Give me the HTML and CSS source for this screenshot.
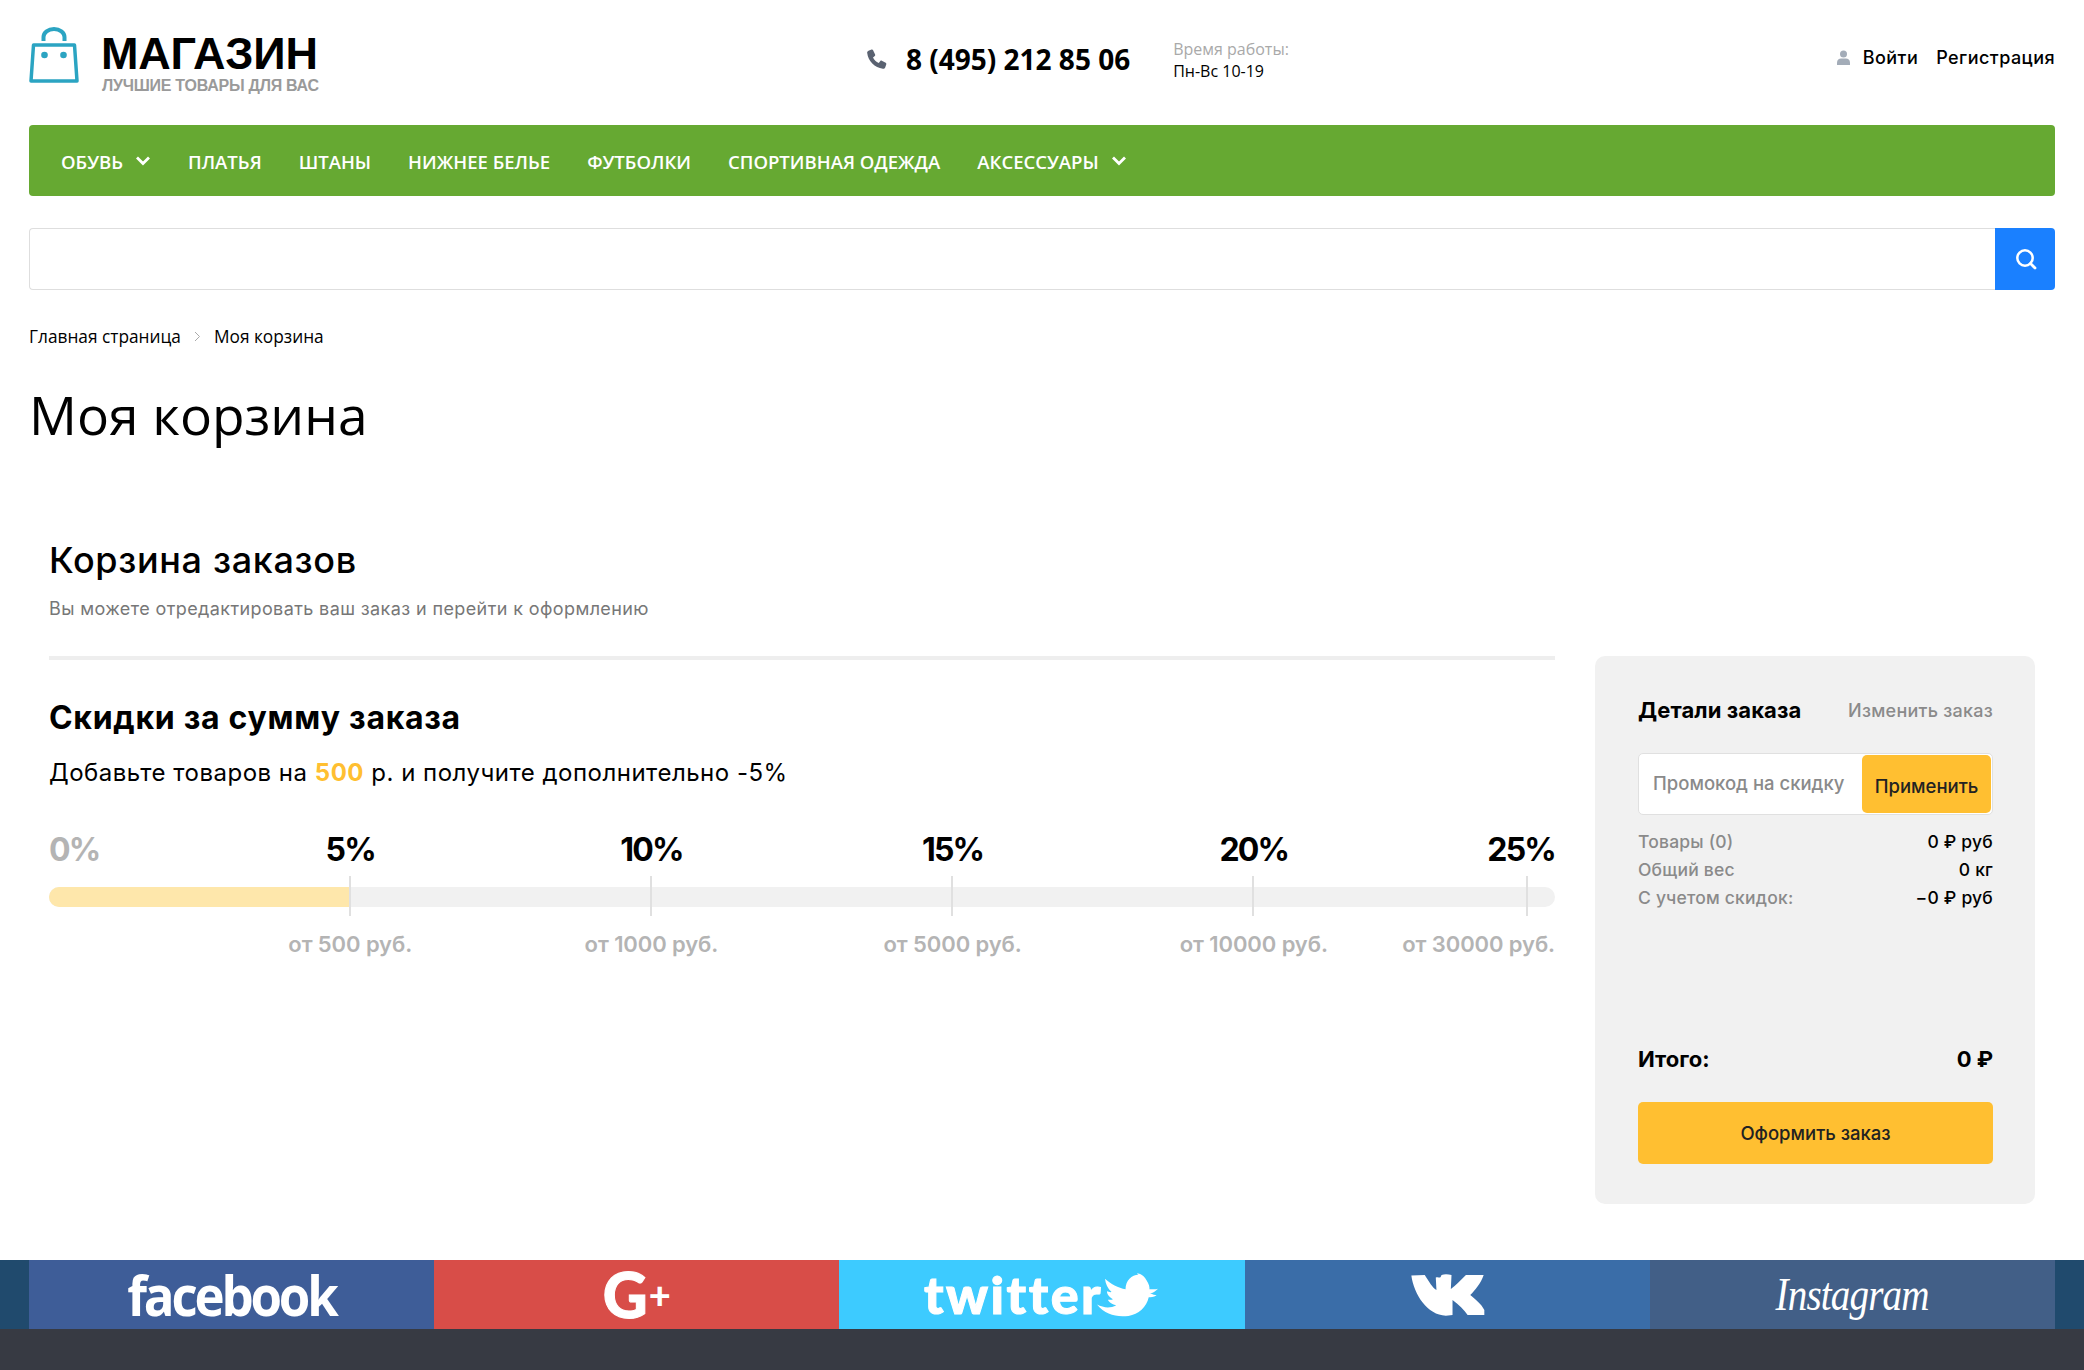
FILE: index.html
```html
<!DOCTYPE html>
<html lang="ru">
<head>
<meta charset="utf-8">
<title>Моя корзина</title>
<link rel="stylesheet" href="styles.css">
</head>
<body>
<div class="wrap">
  <header class="top">
    <a class="logo">
      <svg class="logo-bag" width="50" height="56" viewBox="0 0 50 56"><path d="M14.500 14V10a10.500 8 0 0 1 21 0v4" fill="none" stroke="#2ba4c2" stroke-width="4"/><path d="M4.500 18H45.500l2.500 36H2z" fill="#fff" stroke="#2ba4c2" stroke-width="3.500" stroke-linejoin="round"/><circle cx="15.500" cy="28" r="3.300" fill="#2ba4c2"/><circle cx="34.500" cy="28" r="3.300" fill="#2ba4c2"/></svg>
      <span class="logo-text"><span class="logo-name">МАГАЗИН</span><span class="logo-sub">ЛУЧШИЕ ТОВАРЫ ДЛЯ ВАС</span></span>
    </a>
    <div class="contact">
      <svg class="phone-ico" width="20" height="20" viewBox="0 0 20 20"><path d="M4.600 .6 1.500 1.700C.5 2.100 0 3 .2 4c.9 8 7.500 14.700 15.700 15.700 1 .2 1.900-.4 2.300-1.300l1.100-3.200c.2-.6 0-1.200-.6-1.500l-3.900-2c-.5-.3-1.100-.1-1.500.3l-1.500 1.900C9 12.700 7.200 10.900 6 8.500l1.800-1.500c.5-.4.600-1 .3-1.500L6.100 1.200C5.800.6 5.200.4 4.600.6z" fill="#5a6271"/></svg>
      <span class="phone">8 (495) 212 85 06</span>
      <div class="hours"><span class="hours-l">Время работы:</span><span class="hours-v">Пн-Вс 10-19</span></div>
    </div>
    <div class="auth">
      <svg class="user-ico" width="13" height="15" viewBox="0 0 13 15"><circle cx="6.500" cy="4" r="3.500" fill="#a3acb8"/><path d="M0 15v-2.500C0 10 2 8.500 4 8.500h5c2 0 4 1.500 4 4V15z" fill="#a3acb8"/></svg>
      <a class="auth-link login">Войти</a>
      <a class="auth-link">Регистрация</a>
    </div>
  </header>

  <nav class="nav">
    <a class="nav-item">ОБУВЬ <svg class="chev" width="16" height="10" viewBox="0 0 16 10"><path d="M2 1.500l6 6 6-6" fill="none" stroke="#fff" stroke-width="2.800"/></svg></a>
    <a class="nav-item">ПЛАТЬЯ</a>
    <a class="nav-item">ШТАНЫ</a>
    <a class="nav-item">НИЖНЕЕ БЕЛЬЕ</a>
    <a class="nav-item">ФУТБОЛКИ</a>
    <a class="nav-item">СПОРТИВНАЯ ОДЕЖДА</a>
    <a class="nav-item">АКСЕССУАРЫ <svg class="chev" width="16" height="10" viewBox="0 0 16 10"><path d="M2 1.500l6 6 6-6" fill="none" stroke="#fff" stroke-width="2.800"/></svg></a>
  </nav>

  <div class="search">
    <div class="search-field"></div>
    <button class="search-btn" type="button"><svg width="22" height="22" viewBox="0 0 22 22"><circle cx="10" cy="10" r="7.700" fill="none" stroke="#fff" stroke-width="2.500"/><path d="M15.500 15.500l4.500 4.500" stroke="#fff" stroke-width="2.800" stroke-linecap="round"/></svg></button>
  </div>

  <div class="crumbs"><a>Главная страница</a><svg class="crumb-sep" width="7" height="11" viewBox="0 0 7 11"><path d="M1 1l4.500 4.500L1 10" fill="none" stroke="#aaa" stroke-width="1"/></svg><span>Моя корзина</span></div>

  <h1 class="page-title">Моя корзина</h1>

  <div class="cart">
    <section class="cart-main">
      <h2 class="cart-title">Корзина заказов</h2>
      <p class="cart-sub">Вы можете отредактировать ваш заказ и перейти к оформлению</p>
      <div class="cart-body">
        <h3 class="disc-title">Скидки за сумму заказа</h3>
        <p class="disc-text">Добавьте товаров на <b class="hl">500</b> р. и получите дополнительно -5%</p>
        <div class="scale">
          <div class="pcts">
            <div class="cell"><span class="pct pct-zero">0%</span><span class="mark"><span class="pct">5%</span></span></div>
            <div class="cell"><span class="mark"><span class="pct">10%</span></span></div>
            <div class="cell"><span class="mark"><span class="pct">15%</span></span></div>
            <div class="cell"><span class="mark"><span class="pct">20%</span></span></div>
            <div class="cell cell-last"><span class="pct">25%</span></div>
          </div>
          <div class="track">
            <div class="fill"></div>
            <i class="tick t1"></i><i class="tick t2"></i><i class="tick t3"></i><i class="tick t4"></i><i class="tick t5"></i>
          </div>
          <div class="sums">
            <div class="cell"><span class="mark"><span class="sum">от 500 руб.</span></span></div>
            <div class="cell"><span class="mark"><span class="sum">от 1000 руб.</span></span></div>
            <div class="cell"><span class="mark"><span class="sum">от 5000 руб.</span></span></div>
            <div class="cell"><span class="mark"><span class="sum">от 10000 руб.</span></span></div>
            <div class="cell cell-last"><span class="sum">от 30000 руб.</span></div>
          </div>
        </div>
      </div>
    </section>
    <aside class="order">
      <div class="order-head"><strong>Детали заказа</strong><a>Изменить заказ</a></div>
      <div class="promo"><span class="promo-ph">Промокод на скидку</span><button class="promo-btn" type="button">Применить</button></div>
      <dl class="rows">
        <div class="row"><dt>Товары (0)</dt><dd>0 ₽ руб</dd></div>
        <div class="row"><dt>Общий вес</dt><dd>0 кг</dd></div>
        <div class="row"><dt>С учетом скидок:</dt><dd>−0 ₽ руб</dd></div>
      </dl>
      <div class="total"><span>Итого:</span><span>0 ₽</span></div>
      <button class="checkout" type="button">Оформить заказ</button>
    </aside>
  </div>
</div>

<div class="social-band">
  <div class="social">
    <a class="soc fb"><span class="fb-t">facebook</span></a>
    <a class="soc gp"><span class="gp-g">G</span><span class="gp-p">+</span></a>
    <a class="soc tw"><span class="tw-t">twitter</span><svg class="bird" width="63" height="45" viewBox="20 20 190 135"><path d="M20 118C40 128 60 130 78 120 60 115 55 108 53 103 58 104 65 104 68 102 55 95 50 85 50 78 55 80 60 81 64 80 52 70 46 55 44 40 60 55 85 68 106 72 106 45 125 28 145 28L140 25C150 22 158 30 165 38 172 50 180 60 178 72 188 72 196 72 204 70 196 78 188 84 180 84 188 88 195 90 200 90 190 96 182 96 176 96 170 125 145 148 115 152 80 156 45 150 20 118Z" fill="#fff"/></svg></a>
    <a class="soc vk"><svg width="77" height="44" viewBox="25 25 230 130"><path d="M32 32 72 30C85 50 95 68 107 75L105 38C115 34 118 44 122 30 132 27 142 28 152 30L150 72C165 60 180 45 195 30L248 30C240 55 222 75 208 90 225 105 240 115 250 135L250 150 200 150C190 135 175 120 155 105L155 150 135 152C80 150 40 90 32 32Z" fill="#fff"/></svg></a>
    <a class="soc ig"><span class="ig-t">Instagram</span></a>
  </div>
</div>
<div class="footer"></div>
</body>
</html>
```
FILE: styles.css
```css
* { box-sizing: border-box; }
html, body { margin: 0; padding: 0; }
body { background: #fff; color: #000; font-family: "Inter", "Noto Sans", sans-serif; width: 2084px; }
.wrap { padding: 0 29px; }
a { color: inherit; text-decoration: none; }

.top { height: 125px; display: flex; align-items: center; }
.logo { display: flex; align-items: center; width: 838px; }
.logo-bag { display: block; margin-right: 22px; margin-top: -15px; }
.logo-text { display: flex; flex-direction: column; }
.logo-name { font: 700 45px/44px "Liberation Sans", sans-serif; letter-spacing: -.2px; }
.logo-sub { font: 700 16px/16px "Liberation Sans", sans-serif; color: #9a9a9a; margin-top: 2px; letter-spacing: -.25px; padding-left: 1px; }
.contact { display: flex; align-items: center; font-family: "Open Sans", sans-serif; margin-top: -7px; }
.phone-ico { display: block; margin-right: 19px; }
.phone { font-size: 28px; font-weight: 700; margin-right: 43px; }
.hours { display: flex; flex-direction: column; font-size: 16px; line-height: 22px; padding-top: 2px; }
.hours-l { color: #a9a9a9; }
.auth { margin-left: auto; margin-top: -11px; display: flex; align-items: center; font-size: 18px; font-weight: 500; letter-spacing: .45px; }
.user-ico { display: block; margin-right: 13px; }
.login { margin-right: 18px; }

.nav { height: 71px; background: #66a932; border-radius: 4px; display: flex; align-items: center; padding-left: 32px; gap: 37px; font: 600 18.550px "Open Sans", sans-serif; color: #fff; }
.nav-item { display: flex; align-items: center; white-space: nowrap; padding-top: 1px; }
.chev { margin-left: 12px; display: block; }

.search { margin-top: 32px; height: 62px; display: flex; }
.search-field { flex: 1; border: 1px solid #dedede; border-right: 0; border-radius: 4px 0 0 4px; }
.search-btn { width: 60px; border: 0; padding: 0 0 0 2px; background: #1a80ff; border-radius: 0 4px 4px 0; display: flex; align-items: center; justify-content: center; }

.crumbs { margin-top: 36px; height: 20px; display: flex; align-items: center; font: 400 17.300px "Open Sans", sans-serif; }
.crumb-sep { margin: 0 13px; }

.page-title { margin: 31px 0 0; font: 400 53.300px/76px "Open Sans", sans-serif; }

.cart { margin-top: 85px; padding-left: 20px; display: flex; align-items: flex-start; }
.cart-main { width: 1506px; }
.cart-title { margin: 0; font-size: 36px; font-weight: 500; line-height: 44px; letter-spacing: .65px; }
.cart-sub { margin: 15px 0 0; font-size: 18px; line-height: 24px; color: #777; letter-spacing: .39px; }
.cart-body { margin-top: 35px; border-top: 4px solid #eee; padding-top: 38px; }
.disc-title { margin: 0; font-size: 32px; font-weight: 700; line-height: 40px; letter-spacing: .7px; }
.disc-text { margin: 17px 0 0; font-size: 24px; line-height: 36px; letter-spacing: .5px; }
.hl { color: #ffbf31; font-weight: 700; }

.scale { margin-top: 38px; }
.pcts, .sums { display: flex; }
.pcts { height: 40px; align-items: center; }
.sums { height: 30px; margin-top: 22px; align-items: center; }
.cell { flex: 1 1 0; display: flex; justify-content: flex-end; align-items: center; }
.cell:first-child { justify-content: space-between; }
.sums .cell:first-child { justify-content: flex-end; }
.mark { width: 0; display: flex; justify-content: center; white-space: nowrap; }
.pct { font-size: 32px; font-weight: 700; letter-spacing: -1.800px; white-space: nowrap; }
.pct-zero { color: #b4b4b4; }
.sum { font-size: 22px; font-weight: 600; color: #b4b4b4; white-space: nowrap; letter-spacing: -.1px; }

.track { position: relative; height: 20px; margin-top: 18px; background: #f1f1f1; border-radius: 10px; }
.fill { width: 301px; height: 20px; background: #fee7ab; border-radius: 10px 0 0 10px; }
.tick { position: absolute; top: -11px; height: 40px; width: 2px; background: #e0e0e0; }
.t1 { left: 300px; } .t2 { left: 601px; } .t3 { left: 902px; } .t4 { left: 1203px; } .t5 { left: 1477px; }

.order { width: 440px; height: 548px; margin: 118px 0 0 40px; background: #f1f1f1; border-radius: 10px; padding: 39px 42px 40px 43px; display: flex; flex-direction: column; }
.order-head { display: flex; justify-content: space-between; align-items: center; height: 30px; }
.order-head strong { font-size: 22px; font-weight: 700; letter-spacing: .1px; }
.order-head a { font-size: 18px; font-weight: 500; color: #8a8a8a; letter-spacing: .25px; }
.promo { margin-top: 28px; height: 62px; display: flex; background: #fff; border: 1px solid #e0e0e0; border-radius: 5px; padding: 1px; }
.promo-ph { flex: 1; padding-left: 13px; align-self: center; font-size: 18.500px; font-weight: 500; color: #8a8a8a; margin-top: -2px; white-space: nowrap; }
.promo-btn { width: 129px; border: 0; padding: 4px 0 0; background: #ffbf31; border-radius: 5px; font: 500 18.500px "Inter", sans-serif; color: #222; }
.rows { margin: 12px 0 0; }
.row { display: flex; justify-content: space-between; height: 28px; align-items: center; font-size: 17.500px; font-weight: 500; letter-spacing: .2px; }
.row dt { color: #8a8a8a; }
.row dd { margin: 0; }
.total { margin-top: auto; display: flex; justify-content: space-between; font-size: 22px; font-weight: 700; line-height: 30px; margin-bottom: 28px; }
.checkout { height: 62px; width: 100%; border: 0; background: #ffbf31; border-radius: 5px; font: 500 18.500px "Inter", sans-serif; color: #222; }

.social-band { margin-top: 56px; background: #204a6d; padding: 0 29px; }
.social { display: flex; height: 69px; }
.soc { flex: 1 1 0; display: flex; align-items: center; justify-content: center; color: #fff; white-space: nowrap; }
.fb { background: #3e5d98; }
.gp { background: #d84d48; }
.tw { background: #3dcbff; }
.vk { background: #3a6da8; }
.ig { background: #425f87; }
.fb-t { font: 700 56px/69px "Open Sans", sans-serif; letter-spacing: -3.500px; transform: scaleX(.91); }
.gp-g { font: 900 62px/69px "Lato", sans-serif; -webkit-text-stroke: 1px #fff; }
.gp-p { font: 900 38px/69px "Lato", sans-serif; margin-left: 1px; }
.tw-t { font: 900 52px/69px "Lato", sans-serif; letter-spacing: 2.500px; -webkit-text-stroke: 1px #fff; }
.bird { display: block; margin-left: -6px; }
.ig-t { font: italic 400 46px/69px "Liberation Serif", serif; letter-spacing: -1px; transform: scaleX(.85); }

.footer { height: 41px; background: #373a43; }
```
